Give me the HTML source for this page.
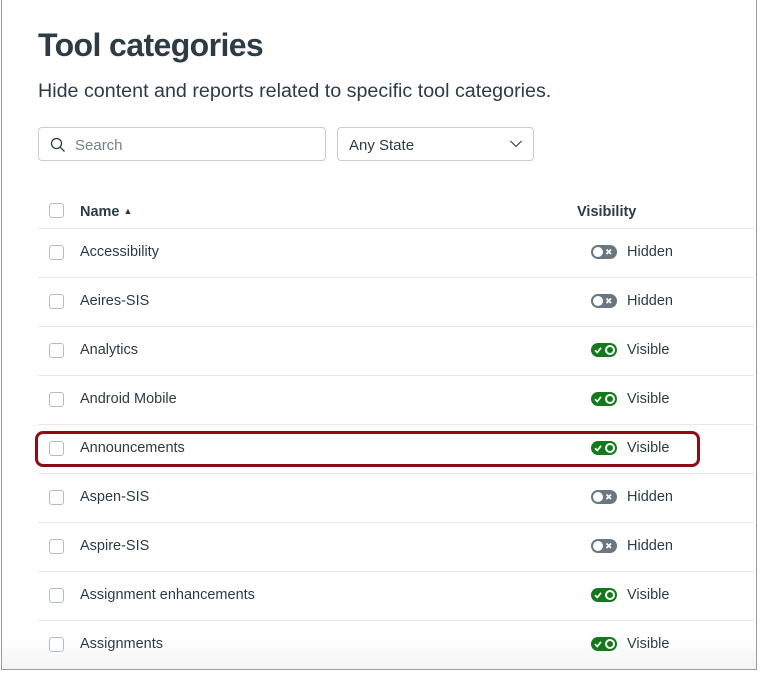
<!DOCTYPE html>
<html><head><style>
*{margin:0;padding:0;box-sizing:border-box}
body{width:761px;height:675px;background:#fff;font-family:"Liberation Sans",sans-serif;color:#2d3b45;position:relative;overflow:hidden}
.frame{position:absolute;left:1px;top:-1px;width:756px;height:671px;border:1px solid #9a9a9a;background:#fff}
.shade{position:absolute;left:2px;top:640px;width:754px;height:29px;background:linear-gradient(#fff,#f3f3f3)}
h1{position:absolute;left:38px;top:27px;font-size:32px;font-weight:bold;color:#2d3b45;letter-spacing:-0.6px}
.sub{position:absolute;left:38px;top:80px;font-size:19.7px;color:#2d3b45}
.search{position:absolute;left:38px;top:127px;width:288px;height:34px;border:1px solid #c7cdd1;border-radius:4px}
.search span{position:absolute;left:36px;top:9px;font-size:15px;color:#73818c}
.sel{position:absolute;left:337px;top:127px;width:197px;height:34px;border:1px solid #c7cdd1;border-radius:4px}
.sel span{position:absolute;left:11px;top:9px;font-size:15px;color:#2d3b45}
.cb{position:absolute;left:49px;width:15px;height:15px;border:1px solid #b5bcc1;border-radius:3px;background:#fff}
.hd{position:absolute;top:203px;font-size:14.5px;font-weight:bold}
.line{position:absolute;left:38px;width:716px;height:1px;background:#e6e9ea}
.nm{position:absolute;left:80px;font-size:14.5px}
.tg{position:absolute;left:591px;width:26px;height:14px;border-radius:7px}
.vis{position:absolute;left:627px;font-size:14.5px}
.hl{position:absolute;left:35px;top:431px;width:665px;height:36px;border:3px solid #8b0e16;border-radius:8px}
</style></head><body>
<div class="frame"></div>
<div class="shade"></div>
<h1>Tool categories</h1>
<div class="sub">Hide content and reports related to specific tool categories.</div>
<div class="search"><svg style="position:absolute;left:11px;top:9px" width="16" height="16" viewBox="0 0 16 16"><circle cx="6.5" cy="6.5" r="5" fill="none" stroke="#2d3b45" stroke-width="1.3"/><path d="M10.2 10.2L14.5 14.5" stroke="#2d3b45" stroke-width="1.3"/></svg><span>Search</span></div>
<div class="sel"><span>Any State</span><svg style="position:absolute;left:172px;top:12px" width="12" height="8" viewBox="0 0 12 8"><path d="M0.5 1L6 6.5L11.5 1" fill="none" stroke="#2d3b45" stroke-width="1.1"/></svg></div>
<div class="cb" style="top:203px"></div>
<div class="hd" style="left:80px;top:204px">Name <span style="font-size:9px;vertical-align:2px">▲</span></div>
<div class="hd" style="left:577px;top:204px">Visibility</div>
<div id="rows"></div>
<script>
var d=[["Accessibility",0],["Aeires-SIS",0],["Analytics",1],["Android Mobile",1],["Announcements",1],["Aspen-SIS",0],["Aspire-SIS",0],["Assignment enhancements",1],["Assignments",1]];
var h="";
d.forEach(function(r,i){var c=252+49*i;
h+='<div class="line" style="top:'+(c-24)+'px"></div>';
h+='<div class="cb" style="top:'+(c-7)+'px"></div>';
h+='<div class="nm" style="top:'+(c-8)+'px">'+r[0]+'</div>';
if(r[1]){h+='<div class="tg" style="top:'+(c-7)+'px;background:#127a1b"><svg width="26" height="14" style="position:absolute;left:0;top:0"><path d="M4 7.2L6.3 9.5L10 4.8" fill="none" stroke="#fff" stroke-width="1.7"/><circle cx="19" cy="7" r="4" fill="none" stroke="#fff" stroke-width="2"/></svg></div><div class="vis" style="top:'+(c-8)+'px">Visible</div>';}
else{h+='<div class="tg" style="top:'+(c-7)+'px;background:#6b7780"><svg width="26" height="14" style="position:absolute;left:0;top:0"><circle cx="7" cy="7" r="5" fill="#fff"/><path d="M15.5 4.5L20 9M20 4.5L15.5 9" stroke="#fff" stroke-width="1.7"/></svg></div><div class="vis" style="top:'+(c-8)+'px">Hidden</div>';}
});
h+='<div class="line" style="top:620px"></div>';
document.getElementById("rows").innerHTML=h;
</script>
<div class="hl"></div>
</body></html>
